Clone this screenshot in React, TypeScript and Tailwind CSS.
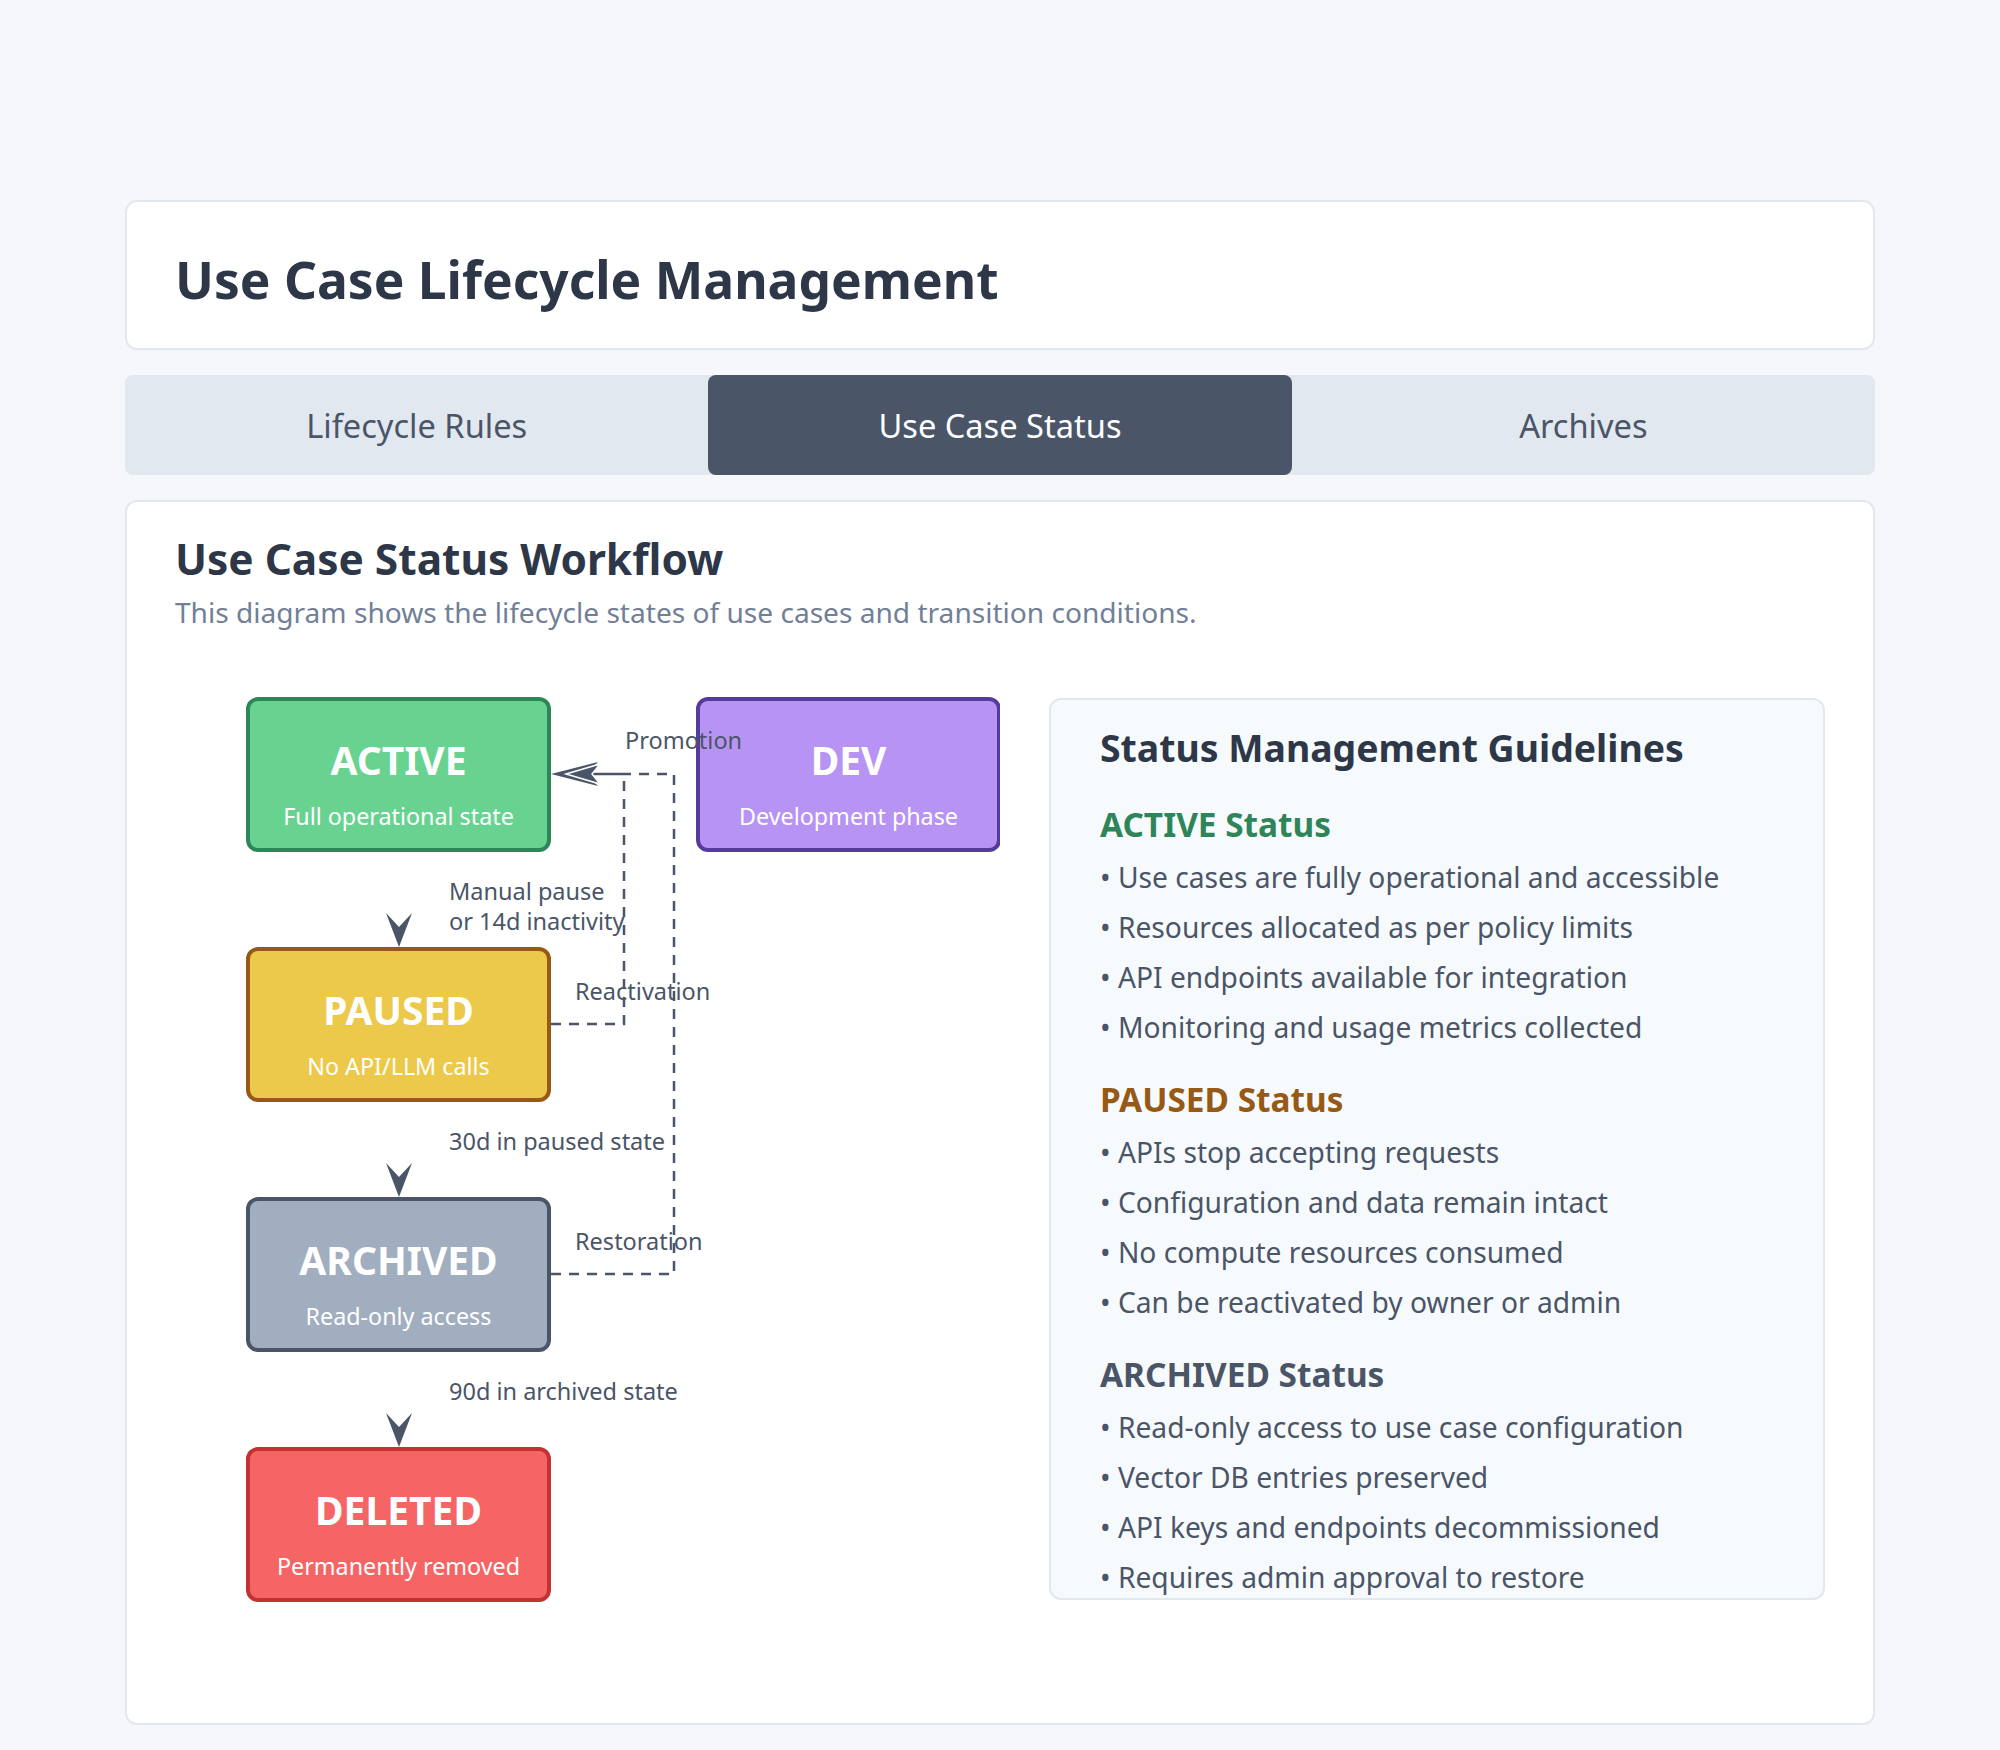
const FONT = "font-['Noto_Sans',sans-serif]";
const SVG_FONT = "'Noto Sans', sans-serif";

interface Section {
  title: string;
  color: string;
  items: string[];
}

const SECTIONS: Section[] = [
  {
    title: "ACTIVE Status",
    color: "text-[#2f855a]",
    items: [
      "Use cases are fully operational and accessible",
      "Resources allocated as per policy limits",
      "API endpoints available for integration",
      "Monitoring and usage metrics collected",
    ],
  },
  {
    title: "PAUSED Status",
    color: "text-[#975a16]",
    items: [
      "APIs stop accepting requests",
      "Configuration and data remain intact",
      "No compute resources consumed",
      "Can be reactivated by owner or admin",
    ],
  },
  {
    title: "ARCHIVED Status",
    color: "text-[#4a5568]",
    items: [
      "Read-only access to use case configuration",
      "Vector DB entries preserved",
      "API keys and endpoints decommissioned",
      "Requires admin approval to restore",
    ],
  },
];

const TABS = ["Lifecycle Rules", "Use Case Status", "Archives"];

interface Node {
  x: number;
  y: number;
  fill: string;
  stroke: string;
  title: string;
  sub: string;
}

// diagram nodes, in page coordinates (the svg viewBox starts at 176,690)
const NODES: Node[] = [
  { x: 249, y: 699, fill: "#68d391", stroke: "#2f855a", title: "ACTIVE", sub: "Full operational state" },
  { x: 699, y: 699, fill: "#b794f4", stroke: "#553c9a", title: "DEV", sub: "Development phase" },
  { x: 249, y: 949, fill: "#ecc94b", stroke: "#975a16", title: "PAUSED", sub: "No API/LLM calls" },
  { x: 249, y: 1199, fill: "#a0aec0", stroke: "#4a5568", title: "ARCHIVED", sub: "Read-only access" },
  { x: 249, y: 1449, fill: "#f56565", stroke: "#c53030", title: "DELETED", sub: "Permanently removed" },
];

function DownArrow({ tipY }: { tipY: number }) {
  const t = tipY;
  return <path d={`M387 ${t - 34} L400 ${t} L413 ${t - 34} L400 ${t - 20} Z`} fill="#4a5568" />;
}

function Label({ x, y, children }: { x: number; y: number; children: string }) {
  return (
    <text x={x} y={y} fill="#4a5568" fontSize="23.5" fontFamily={SVG_FONT}>
      {children}
    </text>
  );
}

function Diagram() {
  return (
    <svg width="825" height="915" viewBox="176 690 825 915" className="flex-shrink-0">
      {/* dashed return paths */}
      <g fill="none" stroke="#4a5568" strokeWidth="2.5" strokeDasharray="10 8">
        <path d="M552 1024 L625 1024 L625 774" />
        <path d="M552 1274 L675 1274 L675 774 L625 774" />
      </g>
      <line x1="590" y1="774" x2="625" y2="774" stroke="#4a5568" strokeWidth="2.5" />

      <Label x={576} y={1000}>Reactivation</Label>
      <Label x={576} y={1250}>Restoration</Label>
      <Label x={450} y={900}>Manual pause</Label>
      <Label x={450} y={930}>or 14d inactivity</Label>
      <Label x={450} y={1150}>30d in paused state</Label>
      <Label x={450} y={1400}>90d in archived state</Label>

      {NODES.map((n) => (
        <g key={n.title}>
          <rect x={n.x} y={n.y} width="301" height="151" rx="10" fill={n.fill} stroke={n.stroke} strokeWidth="4" />
          <text
            x={n.x + 150.5}
            y={n.y + 76}
            textAnchor="middle"
            fill="#ffffff"
            fontSize="39"
            fontWeight="700"
            fontFamily={SVG_FONT}
          >
            {n.title}
          </text>
          <text x={n.x + 150.5} y={n.y + 126} textAnchor="middle" fill="#ffffff" fontSize="23.3" fontFamily={SVG_FONT}>
            {n.sub}
          </text>
        </g>
      ))}

      {/* "Promotion" label sits over the DEV box */}
      <Label x={626} y={749}>Promotion</Label>

      <DownArrow tipY={947} />
      <DownArrow tipY={1197} />
      <DownArrow tipY={1447} />

      {/* double arrowhead into ACTIVE */}
      <path d="M552 774 L599 762 L587 774 L599 786 Z" fill="#4a5568" />
      <path d="M567 774 L601 764 L593 774 L601 784 Z" fill="#4a5568" stroke="#ffffff" strokeWidth="1.5" />
    </svg>
  );
}

export default function App() {
  return (
    <div className={`min-h-[1750px] bg-[#f5f7fa] px-[125px] pt-[200px] pb-[25px] ${FONT}`}>
      {/* Header */}
      <div className="h-[150px] flex items-center px-12 pt-[8px] bg-white border-2 border-[#e2e8f0] rounded-xl">
        <h1 className="text-[51.5px] leading-tight font-bold text-[#2d3748]">Use Case Lifecycle Management</h1>
      </div>

      {/* Tabs */}
      <div className="mt-[25px] h-[100px] grid grid-cols-3 bg-[#e2e8f0] rounded-lg">
        {TABS.map((t) => {
          const active = t === "Use Case Status";
          return (
            <button
              key={t}
              className={
                active
                  ? "flex items-center justify-center pt-[2px] text-[32.6px] text-white bg-[#4a5568] rounded-lg"
                  : "flex items-center justify-center pt-[2px] text-[32.6px] text-[#4a5568]"
              }
            >
              {t}
            </button>
          );
        })}
      </div>

      {/* Main card */}
      <div className="mt-[25px] bg-white border-2 border-[#e2e8f0] rounded-xl px-12 pt-[30px] pb-[118px]">
        <h2 className="text-[42.4px] leading-tight font-bold text-[#2d3748]">Use Case Status Workflow</h2>
        <p className="mt-[6px] text-[28.1px] leading-normal text-[#718096]">
          This diagram shows the lifecycle states of use cases and transition conditions.
        </p>

        <div className="mt-[57px] flex gap-[49px]">
          <Diagram />

          <div className="flex-1 mt-[8px] h-[902px] bg-[#f7fafc] border-2 border-[#e2e8f0] rounded-xl px-[49px] pt-[25px]">
            <h3 className="text-[37.4px] leading-[46px] font-bold text-[#2d3748] mb-[33px]">Status Management Guidelines</h3>
            {SECTIONS.map((s) => (
              <div key={s.title} className="mb-[27px]">
                <h4 className={`text-[33.4px] leading-[40px] font-bold mb-[8px] ${s.color}`}>{s.title}</h4>
                <ul>
                  {s.items.map((it) => (
                    <li key={it} className="text-[28.2px] leading-[50px] text-[#4a5568]">
                      • {it}
                    </li>
                  ))}
                </ul>
              </div>
            ))}
          </div>
        </div>
      </div>
    </div>
  );
}
